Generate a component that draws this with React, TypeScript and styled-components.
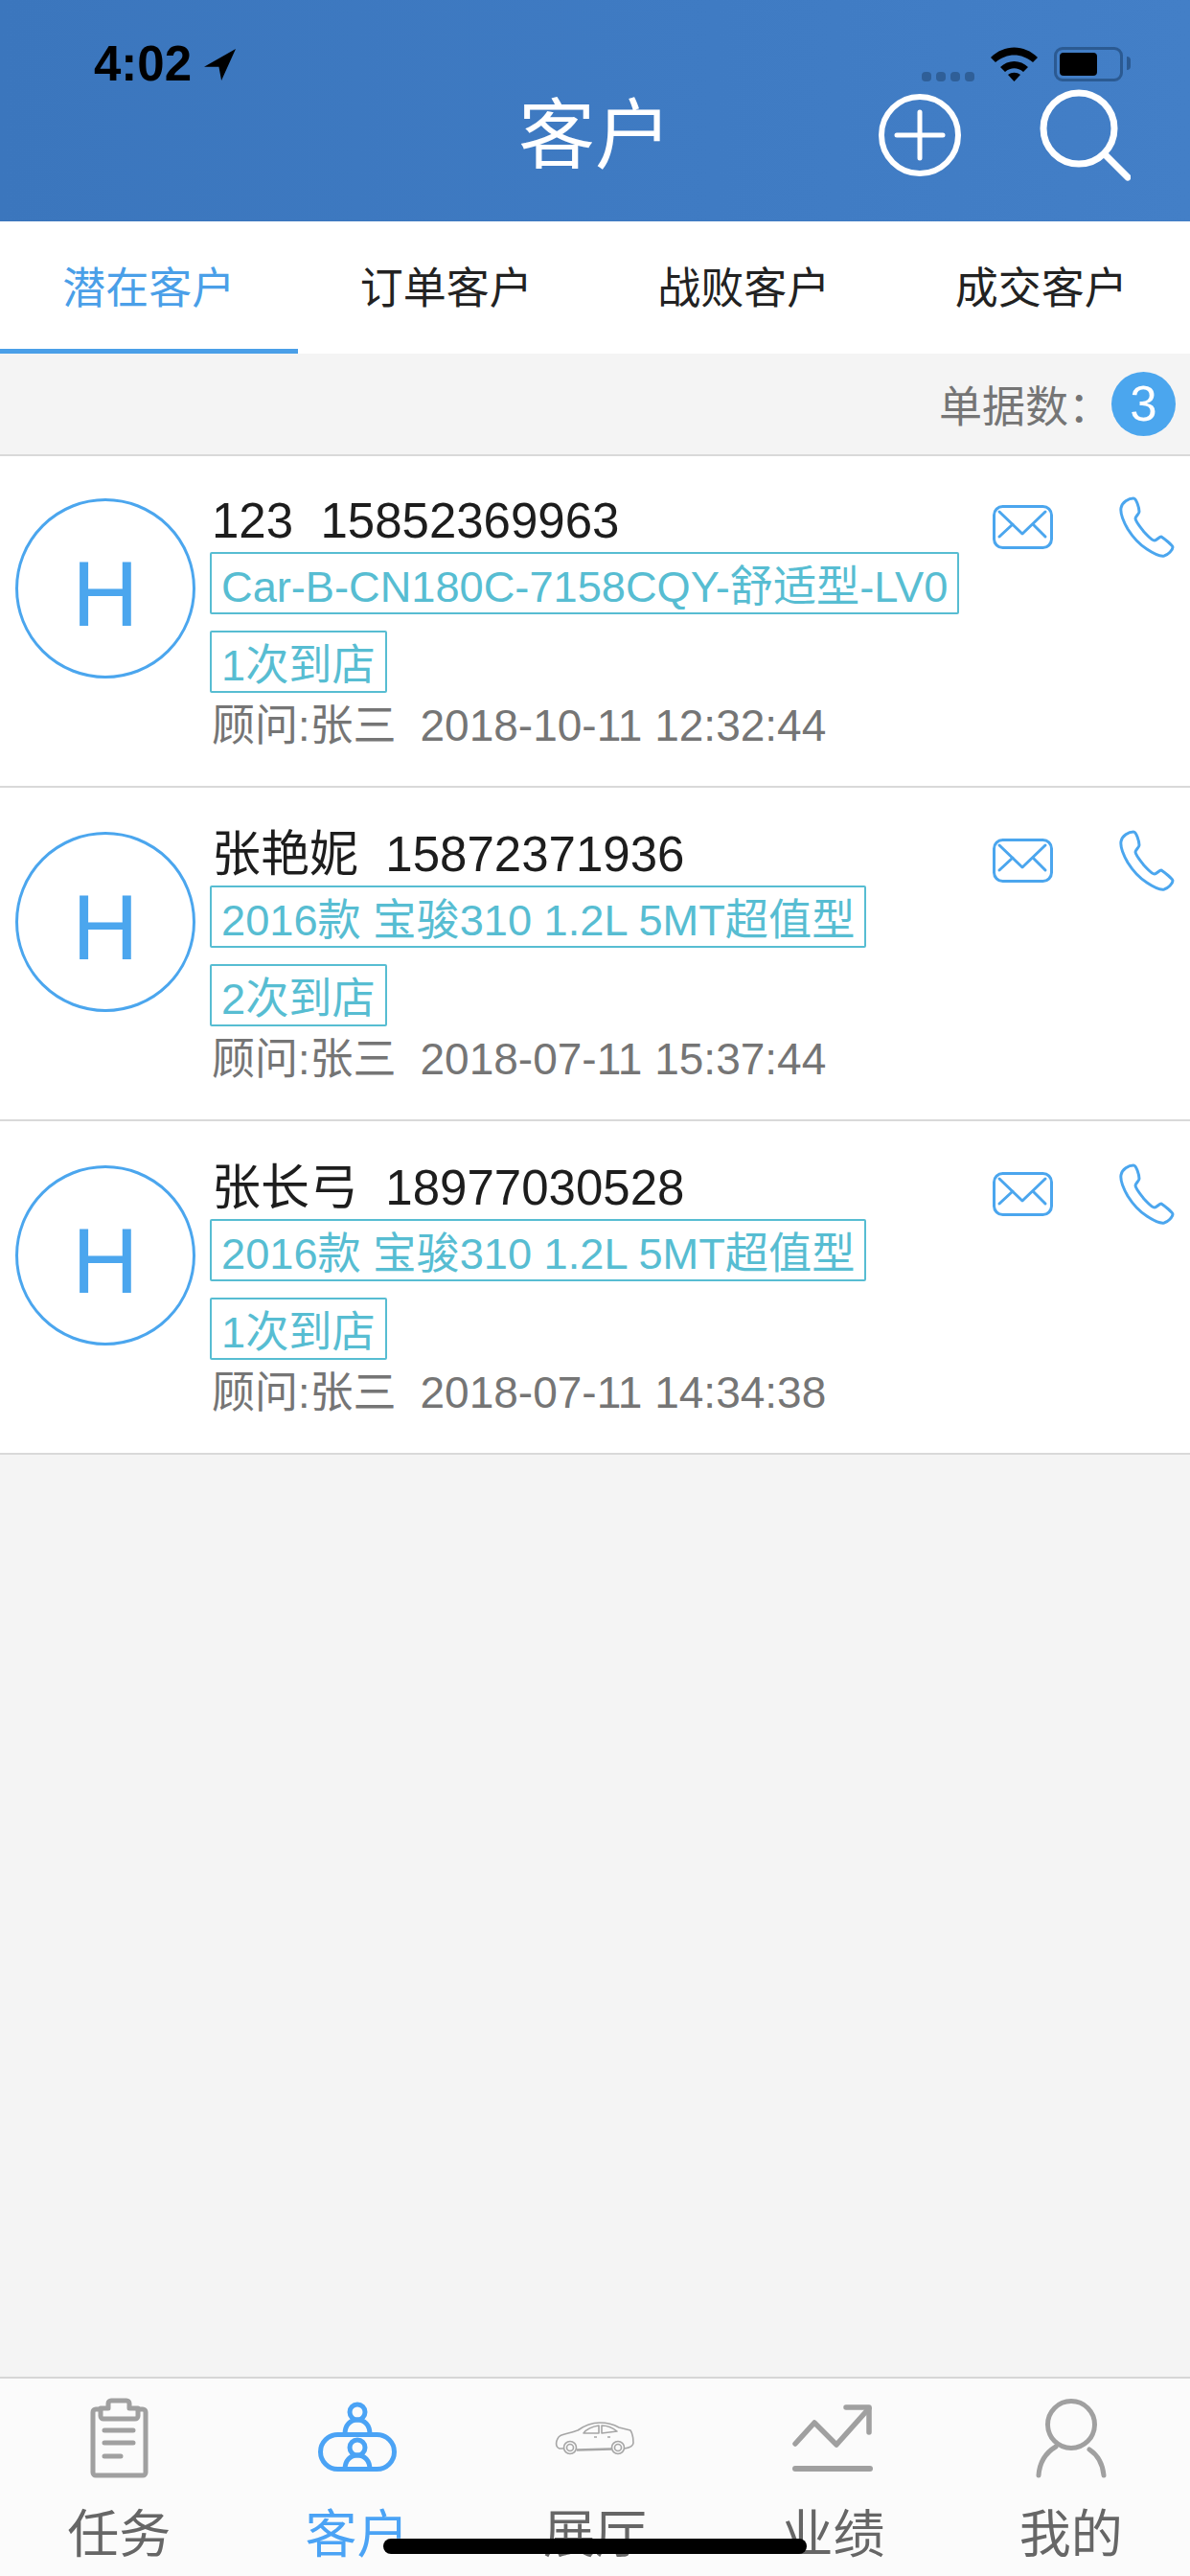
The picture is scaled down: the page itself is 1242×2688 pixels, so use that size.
import React, { useState } from "react";
import styled, { createGlobalStyle } from "styled-components";

const GlobalStyle = createGlobalStyle`
  html, body {
    margin: 0;
    padding: 0;
    background: #f4f4f4;
  }
  * {
    box-sizing: border-box;
  }
  body {
    font-family: "Liberation Sans", "Noto Sans CJK SC", sans-serif;
  }
`;

const TABS = ["潜在客户", "订单客户", "战败客户", "成交客户"];

const CUSTOMERS = [
  {
    name: "123",
    phone: "15852369963",
    car: "Car-B-CN180C-7158CQY-舒适型-LV0",
    visits: "1次到店",
    time: "2018-10-11 12:32:44",
  },
  {
    name: "张艳妮",
    phone: "15872371936",
    car: "2016款 宝骏310 1.2L 5MT超值型",
    visits: "2次到店",
    time: "2018-07-11 15:37:44",
  },
  {
    name: "张长弓",
    phone: "18977030528",
    car: "2016款 宝骏310 1.2L 5MT超值型",
    visits: "1次到店",
    time: "2018-07-11 14:34:38",
  },
];

const TaskIcon = () => (
  <svg width="90" height="90" viewBox="0 0 90 90" fill="none" stroke="#a0a0a0" strokeWidth="5" strokeLinecap="round" strokeLinejoin="round">
    <path d="M26 15H21a3 3 0 0 0-3 3V81a3 3 0 0 0 3 3H70a3 3 0 0 0 3-3V18a3 3 0 0 0-3-3H65" />
    <path d="M26 14V22a3 3 0 0 0 3 3H62a3 3 0 0 0 3-3V14H56V9a3 3 0 0 0-3-3H37a3 3 0 0 0-3 3V14Z" />
    <path d="M30 37H60M30 50H60M30 64H47" />
  </svg>
);

const CustomerIcon = () => (
  <svg width="90" height="90" viewBox="0 0 90 90" fill="none" stroke="#4ba3f5" strokeWidth="5">
    <rect x="6.5" y="41.5" width="77" height="36" rx="18" />
    <circle cx="45" cy="18" r="8" />
    <path d="M32 41C32 31 38 26 45 26S58 31 58 41" />
    <circle cx="45" cy="55" r="8" />
    <path d="M32 78C32 68 38 63 45 63S58 68 58 78" />
  </svg>
);

const CarIcon = () => (
  <svg width="90" height="90" viewBox="0 0 90 90" fill="none" stroke="#a6a6a6" strokeWidth="1.6" strokeLinejoin="round">
    <path d="M12 56H8C5 55 4 52 5 48C6 45 7 43 10 42C16 40 22 39 27 37C34 32 41 29 50 29C57 29 63 30 70 34L82 37C84 40 85 44 85 50C85 53 82 55 76 56" />
    <path d="M26 57.5L62 56.5" strokeWidth="2.4" />
    <circle cx="19" cy="55" r="6.5" />
    <circle cx="19" cy="55" r="3.5" />
    <circle cx="69" cy="55" r="6.5" />
    <circle cx="69" cy="55" r="3.5" />
    <path d="M33 40C36 36 42 33 49 32V40ZM52 32C58 32 63 34 68 38L52 40Z" />
    <path d="M44 44H47M58 44H61" />
  </svg>
);

const TrendIcon = () => (
  <svg width="90" height="90" viewBox="0 0 90 90" fill="none" stroke="#a0a0a0" strokeWidth="5.5" strokeLinecap="round" strokeLinejoin="round">
    <path d="M6 51L26 29L49 52L83 14" />
    <path d="M59 13H83V39" />
    <path d="M6 77H84" strokeWidth="6" />
  </svg>
);

const MineIcon = () => (
  <svg width="90" height="90" viewBox="0 0 90 90" fill="none" stroke="#a0a0a0" strokeWidth="5" strokeLinecap="round">
    <circle cx="45" cy="31" r="24.5" />
    <path d="M11 84C12 70 19 60 29 54M64 57C73 63 78 73 79 84" />
  </svg>
);

const NAV_ITEMS = [
  { label: "任务", icon: <TaskIcon /> },
  { label: "客户", icon: <CustomerIcon />, active: true },
  { label: "展厅", icon: <CarIcon /> },
  { label: "业绩", icon: <TrendIcon /> },
  { label: "我的", icon: <MineIcon /> },
];

const MailIcon = () => (
  <svg width="63" height="46" viewBox="0 0 63 46" fill="none" stroke="#4ba6ee" strokeWidth="3" strokeLinecap="round" strokeLinejoin="round">
    <rect x="1.5" y="1.5" width="60" height="43" rx="9" />
    <path d="M7 7L31 30L55 7M21 20L7 33M42 20L55 33" />
  </svg>
);

const PhoneIcon = () => (
  <svg width="58" height="64" viewBox="0 0 58 64" fill="none" stroke="#4ba6ee" strokeWidth="3" strokeLinejoin="round">
    <path d="M15 2C10 2 3 6 2 12C1 18 5 27 9 34C14 42 21 50 29 55C35 59 42 63 47 62C51 61 56 56 56 53C56 51 47 44 44 42C42 42 39 46 37 46C34 46 29 40 26 37C22 32 17 26 17 23C17 21 21 18 21 16C21 12 18 2 15 2Z" />
  </svg>
);

const App = () => {
  const [activeTab, setActiveTab] = useState(0);

  return (
    <Page>
      <GlobalStyle />
      <Header>
        <StatusBar>
          <Clock>
            4:02
            <svg width="35" height="33" viewBox="0 0 31 31" fill="#000">
              <path d="M31 0L0 17.5H14.5L17 31Z" />
            </svg>
          </Clock>
          <StatusIcons>
            <SignalDots>
              <i />
              <i />
              <i />
              <i />
            </SignalDots>
            <svg width="49" height="36" viewBox="0 0 49 36" fill="#000">
              <path d="M0 11C14-3 35-3 49 11L44 16C32 6 17 6 5 16Z" />
              <path d="M10 21C18 13 31 13 39 21L34 26C28 21 21 21 15 26Z" />
              <path d="M18 29C22 26 27 26 31 29L24.500 36Z" />
            </svg>
            <Battery>
              <BatteryLevel />
            </Battery>
          </StatusIcons>
        </StatusBar>
        <NavRow>
          <span />
          <PageTitle>客户</PageTitle>
          <NavActions>
            <svg width="90" height="90" viewBox="0 0 90 90" fill="none" stroke="#fff" strokeWidth="6" strokeLinecap="round">
              <circle cx="45" cy="45" r="40" />
              <path d="M21 45H69M45 21V69" strokeWidth="5" />
            </svg>
            <svg width="96" height="96" viewBox="0 0 96 96" fill="none" stroke="#fff" strokeWidth="7" strokeLinecap="round">
              <circle cx="42" cy="41" r="37" />
              <path d="M69 68L93 92" />
            </svg>
          </NavActions>
        </NavRow>
      </Header>

      <TabBar>
        {TABS.map((tab, i) => (
          <TabButton key={tab} $active={i === activeTab} onClick={() => setActiveTab(i)}>
            {tab}
          </TabButton>
        ))}
      </TabBar>

      <CountBar>
        <CountLabel>单据数：</CountLabel>
        <CountBadge>{CUSTOMERS.length}</CountBadge>
      </CountBar>

      <List>
        {CUSTOMERS.map((c, i) => (
          <Row key={c.phone} $first={i === 0}>
            <Avatar>H</Avatar>
            <Info>
              <NameLine>
                {c.name}
                {"\u00a0\u00a0"}
                {c.phone}
              </NameLine>
              <Tag>{c.car}</Tag>
              <Tag>{c.visits}</Tag>
              <MetaLine>
                顾问:张三{"\u00a0\u00a0"}
                <Timestamp>{c.time}</Timestamp>
              </MetaLine>
            </Info>
            <RowActions>
              <MailIcon />
              <PhoneIcon />
            </RowActions>
          </Row>
        ))}
      </List>

      <BottomNav>
        {NAV_ITEMS.map((item) => (
          <NavItem key={item.label} $active={item.active}>
            {item.icon}
            <NavLabel>{item.label}</NavLabel>
          </NavItem>
        ))}
        <HomeIndicator />
      </BottomNav>
    </Page>
  );
};

export default App;

const Page = styled.div`
  width: 1242px;
  height: 2688px;
  display: flex;
  flex-direction: column;
  overflow: hidden;
  background: #f4f4f4;
`;

const Header = styled.header`
  height: 231px;
  padding-top: 49px;
  background: linear-gradient(to right, #3b76bd, #3f7bc3 60%, #437fc7);
  flex-shrink: 0;
`;

const StatusBar = styled.div`
  height: 36px;
  padding: 0 63px 0 98px;
  display: flex;
  justify-content: space-between;
  align-items: flex-end;
`;

const Clock = styled.div`
  display: flex;
  align-items: center;
  gap: 12px;
  height: 36px;
  font-size: 51px;
  line-height: 36px;
  font-weight: 700;
  color: #000;
`;

const StatusIcons = styled.div`
  display: flex;
  align-items: flex-end;
  gap: 17px;
`;

const SignalDots = styled.div`
  display: flex;
  gap: 5px;

  i {
    display: block;
    width: 10px;
    height: 10px;
    border-radius: 4px;
    background: #2f5f98;
  }
`;

const Battery = styled.div`
  position: relative;
  width: 72px;
  height: 36px;
  margin-right: 7px;
  padding: 3px;
  border: 3px solid #2b5a92;
  border-radius: 9px;

  &::after {
    content: "";
    position: absolute;
    right: -11px;
    top: 7px;
    width: 4px;
    height: 14px;
    border-radius: 0 4px 4px 0;
    background: #2b5a92;
  }
`;

const BatteryLevel = styled.div`
  width: 39px;
  height: 24px;
  border-radius: 4px;
  background: #000;
`;

const NavRow = styled.div`
  height: 112px;
  display: grid;
  grid-template-columns: minmax(0, 1fr) auto minmax(0, 1fr);
  align-items: center;
`;

const PageTitle = styled.h1`
  margin: 2px 0 0;
  font-size: 80px;
  line-height: 100px;
  font-weight: 400;
  color: #fff;
`;

const NavActions = styled.div`
  padding-right: 62px;
  display: flex;
  align-items: center;
  justify-content: flex-end;
  gap: 79px;
`;

const TabBar = styled.nav`
  height: 138px;
  display: grid;
  grid-template-columns: repeat(4, 1fr);
  background: #fff;
  flex-shrink: 0;
`;

const TabButton = styled.button<{ $active?: boolean }>`
  border: none;
  padding: 0 0 6px;
  font: inherit;
  font-size: 45px;
  background: #fff;
  color: ${(p) => (p.$active ? "#4a9fe8" : "#222")};
  box-shadow: ${(p) => (p.$active ? "inset 0 -5px 0 #4a9fe8" : "none")};
`;

const CountBar = styled.div`
  height: 107px;
  padding-right: 15px;
  display: flex;
  justify-content: flex-end;
  align-items: center;
  border-bottom: 2px solid #d9d9d9;
  flex-shrink: 0;
`;

const CountLabel = styled.span`
  font-size: 45px;
  color: #757575;
`;

const CountBadge = styled.span`
  width: 67px;
  height: 67px;
  border-radius: 50%;
  display: flex;
  align-items: center;
  justify-content: center;
  font-size: 51px;
  color: #fff;
  background: #4ba6ee;
`;

const List = styled.main`
  flex: 1;
`;

const Row = styled.article<{ $first?: boolean }>`
  display: flex;
  padding: ${(p) => (p.$first ? "38px" : "40px")} 16px 31px 16px;
  background: #fff;
  border-bottom: 2px solid #d9d9d9;
`;

const Avatar = styled.div`
  width: 188px;
  height: 188px;
  margin: 6px 15px 0 0;
  padding-top: 11px;
  border: 3px solid #4ba6ee;
  border-radius: 50%;
  display: flex;
  align-items: center;
  justify-content: center;
  font-size: 96px;
  color: #4ba6ee;
  flex-shrink: 0;
`;

const Info = styled.div`
  flex: 1;
  display: flex;
  flex-direction: column;
  align-items: flex-start;
  gap: 17px;
`;

const NameLine = styled.div`
  height: 62px;
  margin-bottom: -17px;
  font-size: 51px;
  line-height: 60px;
  color: #1d1d1d;
  padding-left: 2px;
`;

const Tag = styled.div`
  height: 65px;
  padding: 9px 10px 0;
  border: 2px solid #57bdd2;
  border-radius: 2px;
  font-size: 45.2px;
  line-height: 52px;
  color: #57bdd2;
  white-space: nowrap;
`;

const MetaLine = styled.div`
  height: 66px;
  margin-top: -17px;
  padding-left: 2px;
  font-size: 45px;
  line-height: 68px;
  color: #757575;
`;

const Timestamp = styled.span`
  font-size: 46px;
`;

const RowActions = styled.div`
  display: flex;
  align-items: center;
  gap: 69px;
  height: 64px;
  margin-top: 4px;
`;

const BottomNav = styled.footer`
  position: relative;
  height: 208px;
  padding-top: 17px;
  display: grid;
  grid-template-columns: repeat(5, 1fr);
  background: #fbfbfb;
  border-top: 2px solid #d6d6d6;
  flex-shrink: 0;
`;

const NavItem = styled.div<{ $active?: boolean }>`
  display: flex;
  flex-direction: column;
  align-items: center;
  color: ${(p) => (p.$active ? "#4ba3f5" : "#666")};
`;

const NavLabel = styled.span`
  margin-top: 26px;
  font-size: 54px;
  line-height: 60px;
`;

const HomeIndicator = styled.div`
  position: absolute;
  left: 400px;
  top: 167px;
  width: 442px;
  height: 16px;
  border-radius: 8px;
  background: #000;
`;
